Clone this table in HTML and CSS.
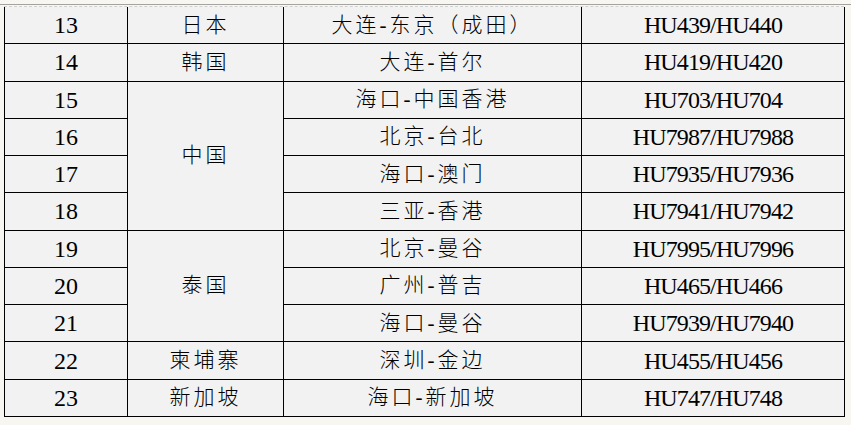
FILE: index.html
```html
<!DOCTYPE html>
<html lang="zh">
<head>
<meta charset="utf-8">
<link rel="stylesheet" href="styles.css">
</head>
<body>
<div class="topline"></div>
<div class="sheet">
<table class="routes">
<colgroup><col class="c1"><col class="c2"><col class="c3"><col class="c4"></colgroup>
<tbody>
<tr class="first"><td class="num">13</td><td class="zh">日本</td><td class="zh">大连-东京（成田）</td><td class="code">HU439/HU440</td></tr>
<tr><td class="num">14</td><td class="zh">韩国</td><td class="zh">大连-首尔</td><td class="code">HU419/HU420</td></tr>
<tr><td class="num">15</td><td class="zh" rowspan="4">中国</td><td class="zh">海口-中国香港</td><td class="code">HU703/HU704</td></tr>
<tr><td class="num">16</td><td class="zh">北京-台北</td><td class="code">HU7987/HU7988</td></tr>
<tr><td class="num">17</td><td class="zh">海口-澳门</td><td class="code">HU7935/HU7936</td></tr>
<tr><td class="num">18</td><td class="zh">三亚-香港</td><td class="code">HU7941/HU7942</td></tr>
<tr><td class="num">19</td><td class="zh" rowspan="3">泰国</td><td class="zh">北京-曼谷</td><td class="code">HU7995/HU7996</td></tr>
<tr><td class="num">20</td><td class="zh">广州-普吉</td><td class="code">HU465/HU466</td></tr>
<tr><td class="num">21</td><td class="zh">海口-曼谷</td><td class="code">HU7939/HU7940</td></tr>
<tr><td class="num">22</td><td class="zh">柬埔寨</td><td class="zh">深圳-金边</td><td class="code">HU455/HU456</td></tr>
<tr><td class="num">23</td><td class="zh">新加坡</td><td class="zh">海口-新加坡</td><td class="code">HU747/HU748</td></tr>
</tbody>
</table>
</div>
</body>
</html>
```
FILE: styles.css
```css
html, body {
  margin: 0;
  padding: 0;
  background: #f7f6f1;
}
.topline {
  height: 4px;
  border-bottom: 1px solid #a3a3a3;
}
.sheet {
  margin: 1px 0 0 4px;
  width: 840px;
  border-top: 1px dashed #d0d0d0;
}
.routes {
  border-collapse: collapse;
  table-layout: fixed;
  width: 841px;
  background: #f2f2f2;
  color: #000;
}
.c1 { width: 123px; }
.c2 { width: 156px; }
.c3 { width: 298px; }
.c4 { width: 263px; }
.routes td {
  border: 1px solid #000;
  height: 36.27px;
  padding: 0;
  text-align: center;
  vertical-align: middle;
  line-height: 1;
  white-space: nowrap;
}
.routes tr.first td {
  border-top: 0;
}
.num {
  font-family: "Liberation Serif", serif;
  font-size: 24px;
}
.zh {
  font-family: "Liberation Serif", "Noto Sans CJK SC", serif;
  font-size: 21px;
  letter-spacing: 3px;
  font-weight: 300;
}
.code {
  font-family: "Liberation Serif", serif;
  font-size: 24px;
  letter-spacing: -0.9px;
}
```
